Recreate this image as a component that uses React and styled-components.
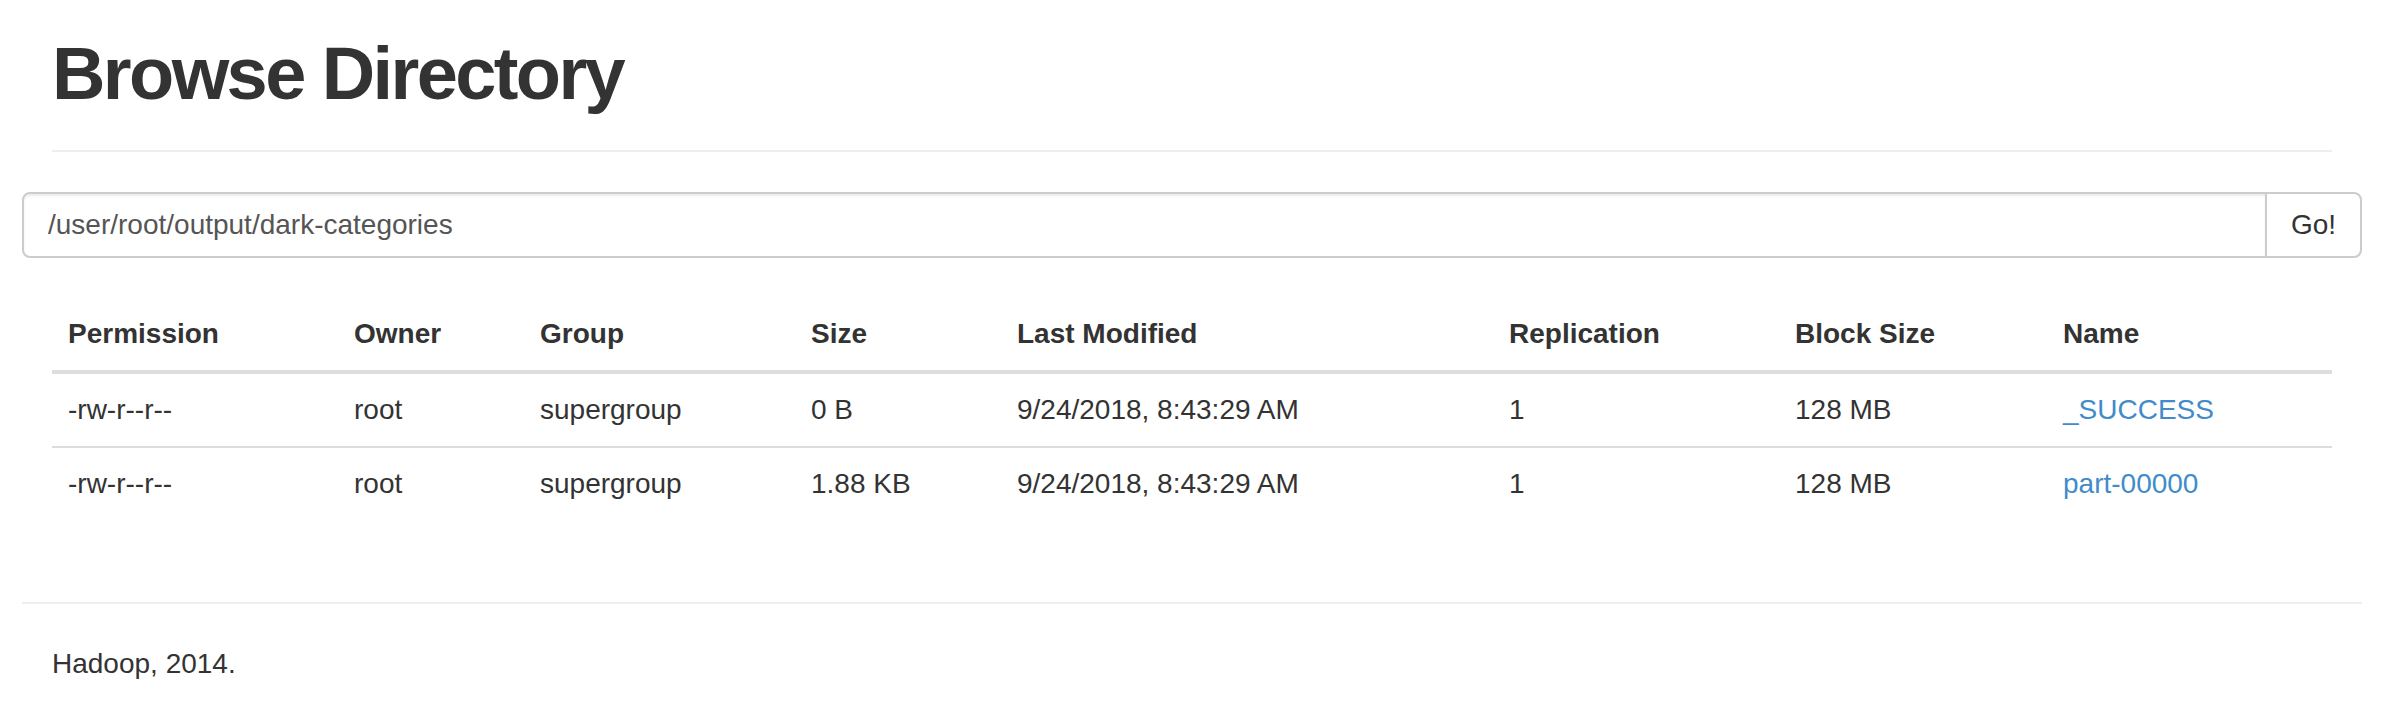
import React from "react";
import styled, { createGlobalStyle } from "styled-components";

const GlobalStyle = createGlobalStyle`
  html, body {
    margin: 0;
    background: #fff;
  }
  body {
    font-family: "Liberation Sans", Arial, Helvetica, sans-serif;
    font-size: 28px;
    line-height: 40px;
    color: #333;
  }
  * {
    box-sizing: border-box;
  }
`;

const columns = [
  { label: "Permission", width: 286 },
  { label: "Owner", width: 186 },
  { label: "Group", width: 271 },
  { label: "Size", width: 206 },
  { label: "Last Modified", width: 492 },
  { label: "Replication", width: 286 },
  { label: "Block Size", width: 268 },
  { label: "Name", width: 285 },
];

const files = [
  {
    permission: "-rw-r--r--",
    owner: "root",
    group: "supergroup",
    size: "0 B",
    modified: "9/24/2018, 8:43:29 AM",
    replication: "1",
    blockSize: "128 MB",
    name: "_SUCCESS",
  },
  {
    permission: "-rw-r--r--",
    owner: "root",
    group: "supergroup",
    size: "1.88 KB",
    modified: "9/24/2018, 8:43:29 AM",
    replication: "1",
    blockSize: "128 MB",
    name: "part-00000",
  },
];

export default function App() {
  return (
    <>
      <GlobalStyle />
      <Container>
        <PageHeader>
          <Title>Browse Directory</Title>
        </PageHeader>

        <SearchForm onSubmit={e => e.preventDefault()}>
          <PathInput
            type="text"
            defaultValue="/user/root/output/dark-categories"
          />
          <GoButton type="submit">Go!</GoButton>
        </SearchForm>

        <Content>
          <Table>
            <colgroup>
              {columns.map(col => (
                <col key={col.label} style={{ width: col.width }} />
              ))}
            </colgroup>
            <thead>
              <tr>
                {columns.map(col => (
                  <HeadCell key={col.label}>{col.label}</HeadCell>
                ))}
              </tr>
            </thead>
            <tbody>
              {files.map((file, i) => (
                <tr key={file.name}>
                  <Cell first={i === 0}>{file.permission}</Cell>
                  <Cell first={i === 0}>{file.owner}</Cell>
                  <Cell first={i === 0}>{file.group}</Cell>
                  <Cell first={i === 0}>{file.size}</Cell>
                  <Cell first={i === 0}>{file.modified}</Cell>
                  <Cell first={i === 0}>{file.replication}</Cell>
                  <Cell first={i === 0}>{file.blockSize}</Cell>
                  <Cell first={i === 0}>
                    <FileLink href="#">{file.name}</FileLink>
                  </Cell>
                </tr>
              ))}
            </tbody>
          </Table>
        </Content>

        <Footer>
          <FooterText>Hadoop, 2014.</FooterText>
        </Footer>
      </Container>
    </>
  );
}

const Container = styled.div`
  width: 2340px;
  margin-left: 22px;
  padding-top: 34px;
`;

const PageHeader = styled.div`
  margin: 0 30px;
  padding-bottom: 36px;
  border-bottom: 2px solid #eee;
`;

const Title = styled.h1`
  margin: 0;
  font-size: 74px;
  line-height: 80px;
  font-weight: 700;
  letter-spacing: -2.6px;
  color: #333;
`;

const SearchForm = styled.form`
  display: flex;
  margin: 40px 0 0;
  height: 66px;
`;

const PathInput = styled.input`
  flex: 1;
  height: 66px;
  padding: 0 24px;
  font-family: inherit;
  font-size: 28px;
  color: #555;
  background: #fff;
  border: 2px solid #ccc;
  border-radius: 8px 0 0 8px;
  box-shadow: inset 0 2px 2px rgba(0, 0, 0, 0.075);
  outline: none;
`;

const GoButton = styled.button`
  width: 97px;
  height: 66px;
  margin-left: -2px;
  padding: 0 24px;
  font-family: inherit;
  font-size: 28px;
  color: #333;
  background: #fff;
  border: 2px solid #ccc;
  border-radius: 0 8px 8px 0;
  cursor: pointer;
`;

const Content = styled.div`
  padding: 40px 30px 0;
`;

const Table = styled.table`
  width: 2280px;
  table-layout: fixed;
  border-collapse: collapse;
  border-spacing: 0;
  margin-bottom: 82px;
`;

const HeadCell = styled.th`
  padding: 16px;
  line-height: 40px;
  text-align: left;
  font-weight: 700;
  border-bottom: 4px solid #ddd;
`;

const Cell = styled.td`
  padding: 16px;
  line-height: 40px;
  border-top: ${p => (p.first ? "0" : "2px solid #ddd")};
  white-space: nowrap;
`;

const FileLink = styled.a`
  color: #428bca;
  text-decoration: none;
`;

const Footer = styled.div`
  border-top: 2px solid #eee;
  padding: 40px 30px 0;
`;

const FooterText = styled.p`
  margin: 0 0 20px;
  line-height: 40px;
`;
